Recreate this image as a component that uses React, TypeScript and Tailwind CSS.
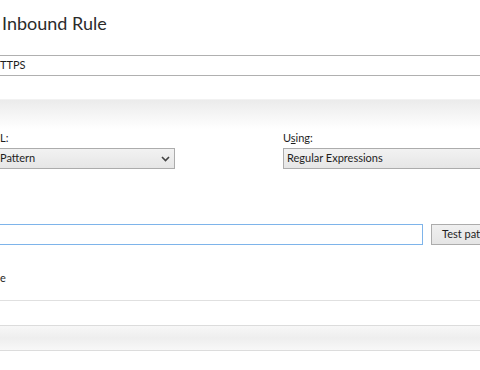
export default function App() {
  return (
    <div className="w-[480px] h-[370px] overflow-hidden bg-white text-[11px] text-[#1e1e1e] font-['Lato','Noto_Sans',sans-serif]">
      {/* Page title */}
      <div className="h-[55px] pt-[12px] pl-[2px]">
        <h1 className="text-[18px] leading-[22px] text-[#2b2b2b] font-['Lato',sans-serif] whitespace-nowrap">
          Inbound Rule
        </h1>
      </div>

      {/* Name field */}
      <div className="h-[21px] border-y border-[#b0b0b0] flex items-center">
        <span className="whitespace-nowrap">TTPS</span>
      </div>

      <div className="h-[23px]" />

      {/* Match URL section header */}
      <div className="h-[30px] bg-gradient-to-b from-[#ebebeb] to-white border-t border-[#f2f2f2]" />

      {/* Labels */}
      <div className="h-[19px] flex items-center">
        <div className="w-[283px]">L:</div>
        <div>
          U<u>s</u>ing:
        </div>
      </div>

      {/* Selects */}
      <div className="h-[21px] flex">
        <div className="w-[175px] flex items-center justify-between border border-l-0 border-[#acacac] bg-gradient-to-b from-[#f2f2f2] to-[#e6e6e6]">
          <span className="whitespace-nowrap">Pattern</span>
          <svg width="9" height="6" viewBox="0 0 9 6" className="mr-[4px]">
            <path d="M1 1 L4.5 4.5 L8 1" fill="none" stroke="#444" strokeWidth="1.6" />
          </svg>
        </div>
        <div className="w-[108px]" />
        <div className="flex-1 flex items-center border border-r-0 border-[#acacac] bg-gradient-to-b from-[#f2f2f2] to-[#e6e6e6] pl-[3px]">
          <span className="whitespace-nowrap">Regular Expressions</span>
        </div>
      </div>

      <div className="h-[55px]" />

      {/* Pattern input + test button */}
      <div className="h-[21px] flex">
        <div className="w-[423px] border border-l-0 border-[#7eb4ea] bg-white" />
        <div className="ml-[8px] flex-1 flex items-center border border-r-0 border-[#acacac] bg-gradient-to-b from-[#f0f0f0] to-[#e5e5e5] pl-[10px] overflow-hidden">
          <span className="whitespace-nowrap">Test pattern...</span>
        </div>
      </div>

      {/* Ignore case */}
      <div className="h-[25px]" />
      <div className="h-[16px] flex items-center">
        <span className="whitespace-nowrap">e</span>
      </div>

      <div className="h-[14px]" />
      <div className="h-[25px] border-t border-[#e0e0e0]" />

      {/* Conditions section header */}
      <div className="h-[26px] border-y border-[#dcdcdc] bg-gradient-to-b from-[#f7f7f7] via-[#eeeeee] to-[#f8f8f8]" />
    </div>
  );
}
